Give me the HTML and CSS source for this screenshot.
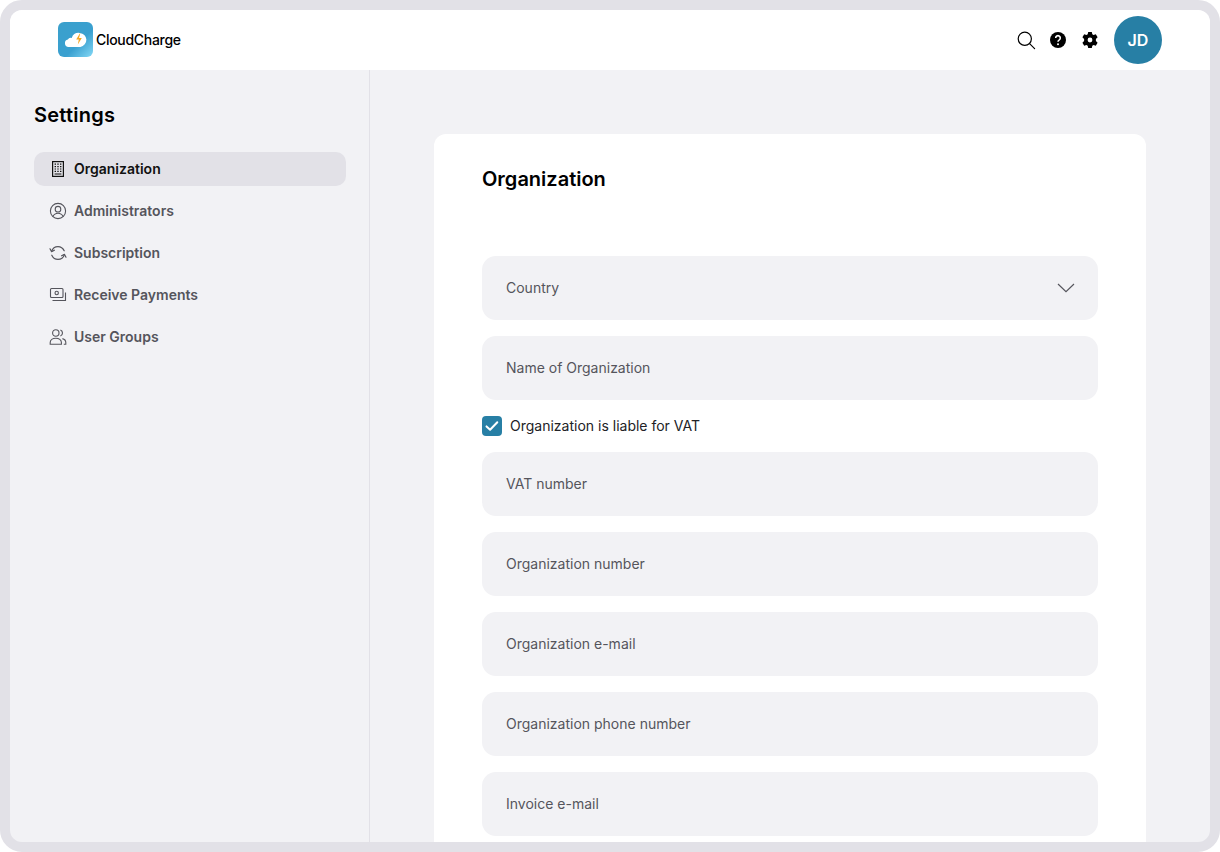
FILE: index.html
```html
<!DOCTYPE html>
<html lang="en">
<head>
  <meta charset="UTF-8">
  <meta name="viewport" content="width=device-width, initial-scale=1.0">
  <title>CloudCharge Settings</title>
  <link rel="stylesheet" href="styles.css">
</head>
<body>

  <div class="frame">
    <!-- Top Bar -->
    <header class="topbar">
      <div class="brand">
        <svg class="brand-logo" width="35" height="35" viewBox="0 0 35 35">
          <defs>
            <linearGradient id="logoFill" x1="0" y1="0" x2="1" y2="1">
              <stop offset="0" stop-color="#3aa0cc"/>
              <stop offset="0.6" stop-color="#3aa0d0"/>
              <stop offset="1" stop-color="#84d8f5"/>
            </linearGradient>
          </defs>
          <rect width="35" height="35" rx="6" fill="url(#logoFill)"/>
          <path d="M10.5 25a3.8 3.8 0 0 1-.6-7.5 3.2 3.2 0 0 1 3.8-1.6A7.6 7.6 0 0 1 28.4 17.5a7.5 7.5 0 0 1-6 7.5z" fill="#fff"/>
          <path d="M21.8 11.4l-3.6 6h2.6l-1 5.2 4-6.6h-2.8l1.3-4.6z" fill="#f5a623"/>
        </svg>
        <span class="brand-name">CloudCharge</span>
      </div>
      <div class="topbar-actions">
        <button class="icon-button">
          <svg width="20" height="20" viewBox="0 0 20 20" fill="none" stroke="#000" stroke-width="1.2" stroke-linecap="round"><circle cx="8.8" cy="8.8" r="6.6"/><path d="M13.6 13.6l5 5"/></svg>
        </button>
        <button class="icon-button">
          <svg width="20" height="20" viewBox="0 0 20 20"><circle cx="10" cy="10" r="8" fill="#000"/><path d="M7.7 8a2.3 2.3 0 1 1 3.6 1.9c-.8.5-1.3 1-1.3 1.9" fill="none" stroke="#fff" stroke-width="1.6"/><circle cx="10" cy="14.2" r="1" fill="#fff"/></svg>
        </button>
        <button class="icon-button">
          <svg width="20" height="20" viewBox="0 0 20 20"><path fill="#000" fill-rule="evenodd" d="M8.2 2h3.6l.5 2.3 1.3.7 2.2-.8 1.8 3.1-1.7 1.6v2.2l1.7 1.6-1.8 3.1-2.2-.8-1.3.7-.5 2.3H8.2l-.5-2.3-1.3-.7-2.2.8-1.8-3.1 1.7-1.6V8.9L2.4 7.3l1.8-3.1 2.2.8 1.3-.7zM10 7.6a2.4 2.4 0 1 0 0 4.8 2.4 2.4 0 0 0 0-4.8z"/></svg>
        </button>
        <div class="avatar">JD</div>
      </div>
    </header>

    <div class="layout">
      <!-- Sidebar -->
      <aside class="sidebar">
        <h2 class="sidebar-title">Settings</h2>
        <nav class="menu">
          <a class="menu-item active">
            <svg width="18" height="18" viewBox="0 0 18 18" fill="none" stroke="currentColor" stroke-width="1.2"><rect x="3.6" y="1.6" width="10.8" height="14.8"/><path d="M5.6 4.2h1.4M8.3 4.2h1.4M11 4.2h1.4M5.6 6.6h1.4M8.3 6.6h1.4M11 6.6h1.4M5.6 9h1.4M8.3 9h1.4M11 9h1.4M5.6 11.4h1.4M8.3 11.4h1.4M11 11.4h1.4M5.6 14h6.8"/></svg>
            Organization
          </a>
          <a class="menu-item">
            <svg width="18" height="18" viewBox="0 0 18 18" fill="none" stroke="currentColor" stroke-width="1.1"><circle cx="9" cy="9" r="7.6"/><circle cx="9" cy="7.2" r="2.8"/><path d="M4 14.4c1-2.2 2.8-3.2 5-3.2s4 1 5 3.2"/></svg>
            Administrators
          </a>
          <a class="menu-item">
            <svg width="18" height="18" viewBox="0 0 18 18" fill="none" stroke="currentColor" stroke-width="1.2" stroke-linecap="round" stroke-linejoin="round"><path d="M2.6 7.4C3.6 4.4 6 2.6 9 2.6c2.8 0 5 1.6 6.2 4.2M15.4 10.6C14.4 13.6 12 15.4 9 15.4c-2.8 0-5-1.6-6.2-4.2"/><path d="M1 4.8l1.6 2.8 2.8-1.4M17 13.2l-1.6-2.8-2.8 1.4"/></svg>
            Subscription
          </a>
          <a class="menu-item">
            <svg width="18" height="18" viewBox="0 0 18 18" fill="none" stroke="currentColor" stroke-width="1.1"><rect x="1.5" y="2.5" width="12.5" height="9" rx="1"/><circle cx="7.7" cy="7" r="1.7"/><path d="M3.5 14.5h13v-8"/></svg>
            Receive Payments
          </a>
          <a class="menu-item">
            <svg width="18" height="18" viewBox="0 0 18 18" fill="none" stroke="currentColor" stroke-width="1.1"><circle cx="6.8" cy="5" r="3.2"/><path d="M1.2 16.2v-1.6c0-2.6 2.4-4.4 5.6-4.4s5.6 1.8 5.6 4.4v1.6z"/><path d="M11.4 2a3.2 3.2 0 0 1 0 6M13.4 10.6c2 .5 3.4 2 3.4 4v1.6h-2"/></svg>
            User Groups
          </a>
        </nav>
      </aside>

      <!-- Main Content -->
      <main class="content">
        <section class="card">
          <h1 class="card-title">Organization</h1>
          <div class="form">
            <div class="field">
              <span>Country</span>
              <svg class="field-arrow" width="18" height="10" viewBox="0 0 18 10" fill="none" stroke="#55555c" stroke-width="1.2"><path d="M1 1l8 7.6L17 1"/></svg>
            </div>
            <div class="field"><span>Name of Organization</span></div>
            <label class="check-row">
              <span class="checkbox">
                <svg width="14" height="12" viewBox="0 0 14 12" fill="none" stroke="#fff" stroke-width="2" stroke-linecap="round" stroke-linejoin="round"><path d="M1.5 6.4l3.6 3.4 7.2-7.6"/></svg>
              </span>
              <span class="check-label">Organization is liable for VAT</span>
            </label>
            <div class="field"><span>VAT number</span></div>
            <div class="field"><span>Organization number</span></div>
            <div class="field"><span>Organization e-mail</span></div>
            <div class="field"><span>Organization phone number</span></div>
            <div class="field"><span>Invoice e-mail</span></div>
          </div>
        </section>
      </main>
    </div>
  </div>

</body>
</html>
```

FILE: styles.css
```css
/* General Styles */
html,
body {
  height: 100%;
}

body {
  margin: 0;
  background: #ffffff;
  font-family: Inter, "Liberation Sans", sans-serif;
  color: #000000;
  overflow: hidden;
}

/* Window Frame */
.frame {
  box-sizing: border-box;
  height: 852px;
  border: 10px solid #e2e1e7;
  border-radius: 22px;
  background: #f2f2f5;
  overflow: hidden;
  display: flex;
  flex-direction: column;
}

/* Top Bar */
.topbar {
  flex: none;
  height: 60px;
  background: #ffffff;
  display: flex;
  align-items: center;
  justify-content: space-between;
  padding: 0 48px;
}

.brand {
  display: flex;
  align-items: center;
  gap: 3px;
  padding-bottom: 1px;
}

.brand-logo {
  display: block;
}

.brand-name {
  margin-bottom: 1px;
  font-size: 14px;
  font-weight: 500;
  letter-spacing: -0.3px;
}

.topbar-actions {
  display: flex;
  align-items: center;
  gap: 8px;
}

.icon-button {
  width: 24px;
  height: 24px;
  padding: 0;
  border: none;
  background: none;
  display: flex;
  align-items: center;
  justify-content: center;
}

.avatar {
  width: 48px;
  height: 48px;
  margin-left: 4px;
  border-radius: 50%;
  background: #277fa5;
  color: #ffffff;
  font-size: 16px;
  font-weight: 600;
  display: flex;
  align-items: center;
  justify-content: center;
}

/* Page Layout */
.layout {
  flex: 1;
  display: flex;
  min-height: 0;
}

/* Sidebar */
.sidebar {
  box-sizing: border-box;
  width: 360px;
  flex: none;
  padding: 32px 23px 0 24px;
  border-right: 1px solid #e2e1e7;
}

.sidebar-title {
  margin: 0 0 24px;
  font-size: 20px;
  line-height: 26px;
  font-weight: 600;
  letter-spacing: 0.25px;
}

.menu {
  display: flex;
  flex-direction: column;
  gap: 8px;
}

.menu-item {
  box-sizing: border-box;
  height: 34px;
  padding: 0 15px 2px;
  border-radius: 10px;
  display: flex;
  align-items: center;
  gap: 7px;
  font-size: 14px;
  font-weight: 600;
  color: #55555c;
}

.menu-item svg {
  margin-top: 2px;
}

.menu-item.active {
  background: #e2e1e7;
  color: #111111;
}

/* Main Content */
.content {
  flex: 1;
  min-width: 0;
  padding: 64px 64px 0;
}

.card {
  background: #ffffff;
  border-radius: 12px 12px 0 0;
  padding: 32px 48px 48px;
}

.card-title {
  margin: 0 0 64px;
  font-size: 20px;
  line-height: 26px;
  font-weight: 600;
}

/* Form */
.form {
  display: flex;
  flex-direction: column;
  gap: 16px;
}

.field {
  box-sizing: border-box;
  height: 64px;
  padding: 0 23px 2px 24px;
  border-radius: 14px;
  background: #f2f2f5;
  display: flex;
  align-items: center;
  justify-content: space-between;
  font-size: 14px;
  color: #55555c;
}

.field-arrow {
  margin-top: 2px;
}

.check-row {
  height: 20px;
  display: flex;
  align-items: center;
  gap: 8px;
  font-size: 14px;
  color: #222226;
}

.check-label {
  margin-bottom: 2px;
}

.checkbox {
  width: 20px;
  height: 20px;
  border-radius: 4px;
  background: #277fa5;
  display: flex;
  align-items: center;
  justify-content: center;
}
```
